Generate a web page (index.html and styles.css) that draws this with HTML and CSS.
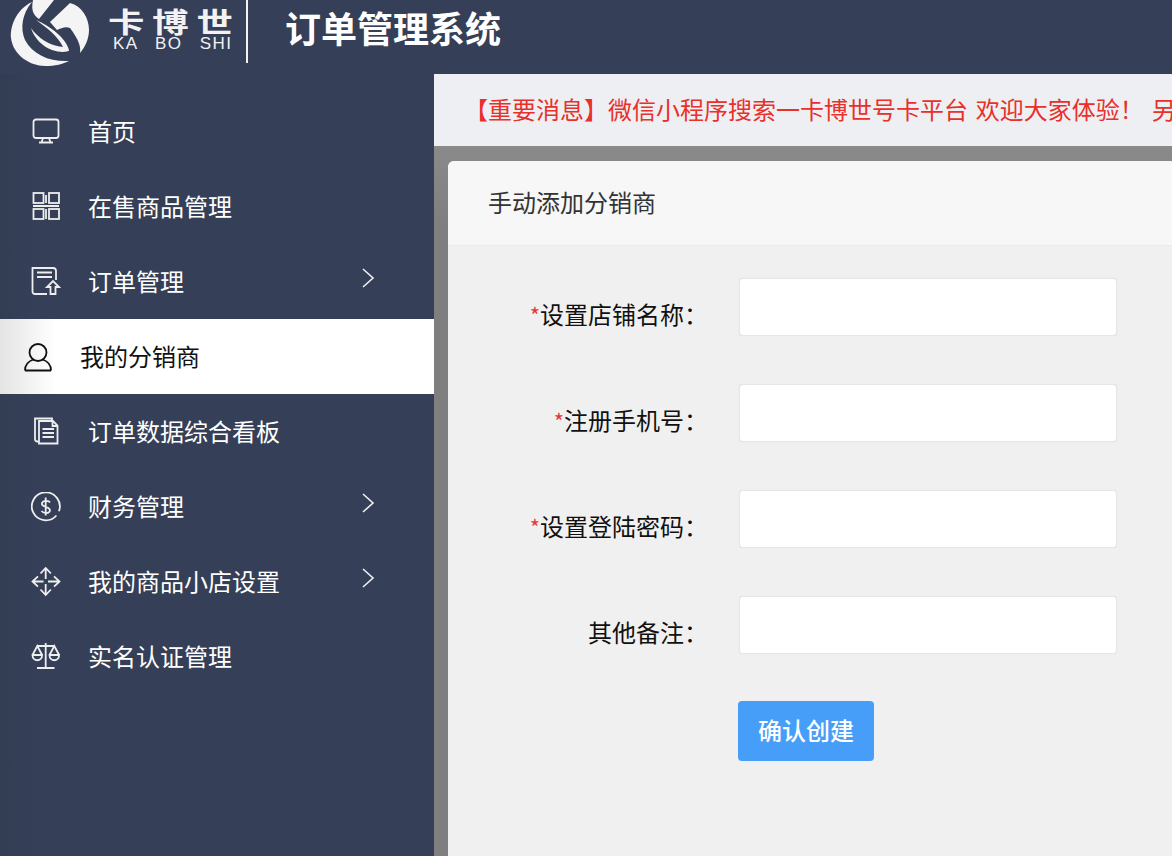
FILE: index.html
```html
<!DOCTYPE html>
<html lang="zh-CN">
<head>
    <meta charset="UTF-8">
    <meta name="viewport" content="width=device-width, initial-scale=1.0">
    <title>订单管理系统</title>
    <link rel="stylesheet" href="styles.css">
</head>
<body>
    <header class="top-bar">
        <svg class="logo-mark" viewBox="0 0 80 67" fill="#f4f4f4">
            <path d="M22 2C5 10 0 28 1 38c2 17 19 28 34 28 10 0 18-2 24-5-19 1-36-6-44-21C10 28 12 14 22 2Z"/>
            <path d="M23 0h21L29 19C23 15 21 10 23 0Z"/>
            <path d="M40 22 60 3c12 3 19 15 19 27 0 9-4 17-9 23 1-6-1-13-10-25-4-2-9 0-13 2Z"/>
            <path d="M26 20c14 6 30 18 33 30 1 2-9 3-17 0-9-3-18-12-21-22 7 10 19 18 32 19-5-11-17-20-27-27Z"/>
        </svg>
        <div class="logo-text">
            <div class="logo-cn">卡博世</div>
            <div class="logo-en">KA BO SHI</div>
        </div>
        <div class="logo-line"></div>
        <div class="sys-title">订单管理系统</div>
    </header>

    <div class="layout">
        <nav class="sidebar">
            <a class="nav-item">
                <svg class="nav-icon" viewBox="0 0 30 30"><rect x="2.500" y="2.500" width="25" height="18.500" rx="2.500"/><path d="M12 21l-1.500 4.500M18 21l1.500 4.500M8 25.500h14"/></svg>
                <span>首页</span>
            </a>
            <a class="nav-item">
                <svg class="nav-icon" viewBox="0 0 30 30"><rect x="2.500" y="1" width="10" height="10"/><rect x="18" y="1" width="10" height="10"/><path d="M15 3v8M2 14h26M15 17v10"/><rect x="2.500" y="17" width="10" height="10"/><rect x="18" y="17" width="10" height="10"/></svg>
                <span>在售商品管理</span>
            </a>
            <a class="nav-item">
                <svg class="nav-icon" viewBox="0 0 30 30"><path d="M16 27H4a2.500 2.500 0 0 1-2.500-2.500V1h20.500a3 3 0 0 1 3 3v9"/><path d="M6 5.500h15M6 10h15M19.500 27v-7H16l6-6 6 6h-3.500v7z"/></svg>
                <span>订单管理</span>
                <svg class="nav-arrow" viewBox="0 0 16 22"><path d="M3 2l10 9-10 9"/></svg>
            </a>
            <a class="nav-item active">
                <svg class="nav-icon" viewBox="0 0 30 30"><circle cx="15" cy="10.500" r="8.500"/><path d="M2 28.500c0-6 4-9.500 8.500-11M28 28.500c0-6-4-9.500-8.500-11M2 28.500h26"/></svg>
                <span>我的分销商</span>
            </a>
            <a class="nav-item">
                <svg class="nav-icon" viewBox="0 0 30 30"><path d="M8 24.500H6.500a2.500 2.500 0 0 1-2.500-2.500V1.500h17v2"/><path d="M8 4h14l4.500 4.500V26.500H8zM21.500 4v5h5M11.500 12h11.500M11.500 16h11.500M11.500 20h11.500"/></svg>
                <span>订单数据综合看板</span>
            </a>
            <a class="nav-item">
                <svg class="nav-icon" viewBox="0 0 30 30"><path d="M25.400 23.500A14 14 0 1 1 27.900 19.300"/><path d="M19 10.500c-1-1.800-6.200-2.500-7.700 0-1.200 2.200.5 3.500 3.400 4.400 3.300 1 5 2.500 3.900 4.600-1.400 2.500-6.400 1.700-8.100-.5M14.700 5.500v18"/></svg>
                <span>财务管理</span>
                <svg class="nav-arrow" viewBox="0 0 16 22"><path d="M3 2l10 9-10 9"/></svg>
            </a>
            <a class="nav-item">
                <svg class="nav-icon" viewBox="0 0 30 30"><path d="M14.700 1v11M14.700 17v11M1.500 14.500h11M17 14.500h11.500M9.500 6.500 14.700 1l5.200 5.500M9.500 22.500l5.200 5.500 5.200-5.500M7 9.300l-5.500 5.200L7 19.700M23 9.300l5.500 5.200-5.500 5.200"/></svg>
                <span>我的商品小店设置</span>
                <svg class="nav-arrow" viewBox="0 0 16 22"><path d="M3 2l10 9-10 9"/></svg>
            </a>
            <a class="nav-item">
                <svg class="nav-icon" viewBox="0 0 30 30"><path d="M14.700 1v24M6 26h17.500M6.300 4h16.800M1.500 13 6.300 4l4.800 9M18.500 13l4.800-9 4.800 9M1.500 13h9.600c0 7-9.600 7-9.600 0zM18.500 13h9.600c0 7-9.600 7-9.600 0z"/></svg>
                <span>实名认证管理</span>
            </a>
        </nav>

        <main class="content">
            <div class="notice">【重要消息】微信小程序搜索一卡博世号卡平台 欢迎大家体验！ 另</div>
            <div class="page-wrap">
                <section class="card">
                    <div class="card-head">手动添加分销商</div>
                    <form class="card-form">
                        <div class="form-row">
                            <label><i>*</i>设置店铺名称：</label>
                            <input type="text">
                        </div>
                        <div class="form-row">
                            <label><i>*</i>注册手机号：</label>
                            <input type="text">
                        </div>
                        <div class="form-row">
                            <label><i>*</i>设置登陆密码：</label>
                            <input type="text">
                        </div>
                        <div class="form-row">
                            <label>其他备注：</label>
                            <input type="text">
                        </div>
                        <button type="button" class="submit-btn">确认创建</button>
                    </form>
                </section>
            </div>
        </main>
    </div>
</body>
</html>
```

FILE: styles.css
```css
html, body {
    margin: 0;
    padding: 0;
    height: 100%;
    overflow: hidden;
    font-family: "Noto Sans CJK SC", "Liberation Sans", sans-serif;
    background-color: #353f57;
}
body {
    display: flex;
    flex-direction: column;
}
.top-bar {
    display: flex;
    align-items: flex-start;
    flex: none;
    height: 74px;
    background-color: #353f57;
    color: #fff;
    overflow: hidden;
}
.logo-mark {
    flex: none;
    width: 80px;
    height: 67px;
    margin-left: 10px;
}
.logo-text {
    flex: none;
    width: 138px;
    margin-left: 18px;
    padding-top: 6px;
    color: #f2f2f2;
}
.logo-cn {
    height: 30px;
    font-size: 28px;
    font-weight: 700;
    line-height: 30px;
    letter-spacing: 6px;
    white-space: nowrap;
    transform: scaleX(1.3);
    transform-origin: left center;
}
.logo-en {
    padding-left: 5px;
    font-family: "Liberation Sans", sans-serif;
    font-size: 17px;
    line-height: 16px;
    letter-spacing: 1.5px;
    word-spacing: 11px;
    white-space: nowrap;
}
.logo-line {
    flex: none;
    width: 2px;
    height: 63px;
    background-color: #f2f2f2;
}
.sys-title {
    margin-left: 37px;
    padding-top: 1px;
    font-size: 36px;
    font-weight: 700;
    line-height: 52px;
    white-space: nowrap;
}
.layout {
    display: flex;
    flex: 1;
    min-height: 0;
}
.sidebar {
    flex: none;
    width: 434px;
    padding-top: 20px;
    box-sizing: border-box;
    background: linear-gradient(to right, #323c53, #353f57 30px);
}
.nav-item {
    display: flex;
    align-items: center;
    height: 75px;
    padding-left: 31px;
    box-sizing: border-box;
    color: #fff;
    font-size: 24px;
    white-space: nowrap;
}
.nav-item span {
    margin: -2px 0 0 27px;
}
.nav-icon {
    flex: none;
    width: 30px;
    height: 30px;
    fill: none;
    stroke: #eee;
    stroke-width: 1.8;
}
.nav-arrow {
    flex: none;
    position: absolute;
    left: 360px;
    width: 16px;
    height: 22px;
    margin-top: -8px;
    fill: none;
    stroke: #f0f0f0;
    stroke-width: 1.6;
}
.nav-item.active {
    padding-left: 23px;
    color: #111;
    background: linear-gradient(to right, #e4e4e4, #fff 55px);
}
.nav-item.active .nav-icon {
    stroke: #111;
}
.content {
    flex: 1;
    min-width: 0;
    display: flex;
    flex-direction: column;
    overflow: hidden;
}
.notice {
    flex: none;
    height: 72px;
    padding-left: 30px;
    background-color: #eeeff3;
    color: #e9302a;
    font-size: 24px;
    line-height: 70px;
    word-spacing: 2.5px;
    white-space: nowrap;
    overflow: hidden;
}
.page-wrap {
    flex: 1;
    padding: 15px 0 0 14px;
    min-height: 0;
    background: linear-gradient(to bottom, #8a8a8a, #7f7f7f 80px);
}
.card {
    width: 900px;
    height: 100%;
    background-color: #f0f0f0;
    border-radius: 6px 0 0 0;
    overflow: hidden;
}
.card-head {
    height: 85px;
    padding-left: 40px;
    background-color: #f7f7f7;
    border-bottom: 1px solid #ececec;
    box-sizing: border-box;
    color: #333;
    font-size: 24px;
    line-height: 82px;
}
.card-form {
    padding-top: 32px;
}
.form-row {
    display: flex;
    align-items: center;
    margin-bottom: 48px;
}
.form-row label {
    flex: none;
    width: 260px;
    margin-right: 31px;
    padding-top: 12px;
    color: #111;
    font-size: 24px;
    text-align: right;
    white-space: nowrap;
}
.form-row label i {
    color: #e23b3b;
    font-style: normal;
    font-size: 22px;
}
.form-row input {
    width: 378px;
    height: 58px;
    padding: 0 10px;
    box-sizing: border-box;
    background-color: #fff;
    border: 1px solid #e6e6e6;
    border-radius: 4px;
    box-shadow: 0 0 1px #ddd;
    outline: none;
}
.submit-btn {
    display: block;
    width: 136px;
    height: 60px;
    margin: -1px 0 0 290px;
    padding: 0 0 3px;
    background-color: #469ef9;
    border: none;
    border-radius: 4px;
    color: #fff;
    font-family: inherit;
    font-size: 24px;
    font-weight: 500;
}
```
